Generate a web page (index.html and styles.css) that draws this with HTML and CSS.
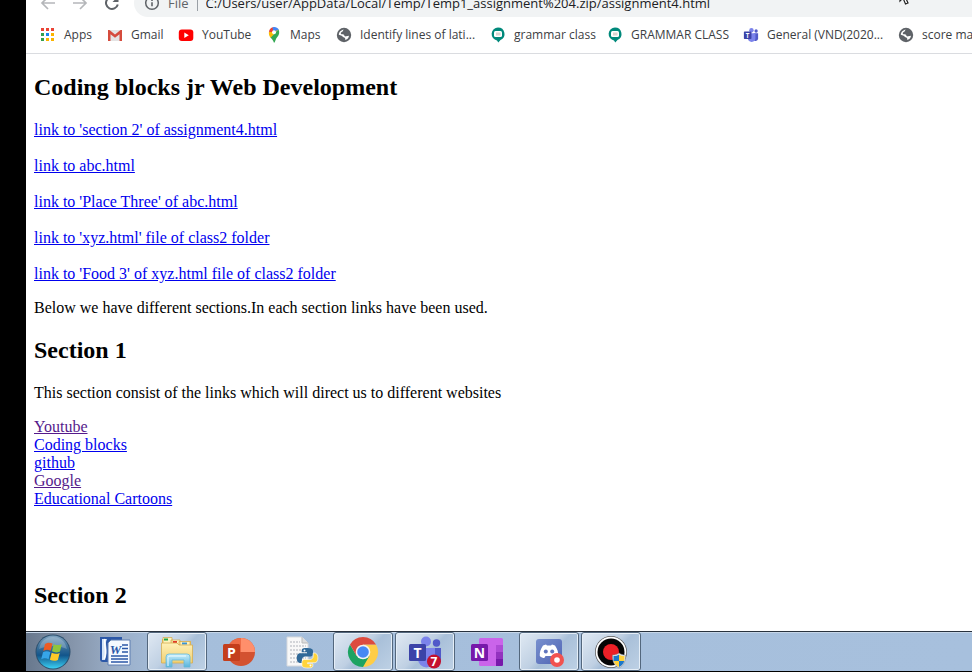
FILE: index.html
```html
<!DOCTYPE html>
<html lang="en">
<head>
<meta charset="utf-8">
<title>assignment4.html</title>
<link rel="stylesheet" href="styles.css">
</head>
<body>
<svg class="defs" aria-hidden="true">
  <defs>
    <symbol id="globe" viewBox="0 0 16 16">
      <circle cx="8" cy="8" r="7.200" fill="#5f6368"/>
      <path d="M8.200 2.800c-1.600.3-.9 1.500-2 2-.8.400-1.500.9-1.400 1.600.1.900 1.200.8 2 .9 1.200.1 1.500.6 1.500 1.300 0 .8 1 .9 1.900.7l2.800-.5c-.3 2-1.500 3.600-3.500 4.300-.6-.6.1-1.500-.6-2.100-.7-.6-2-.5-2.400-1.400-.3-.8-1.300-1.200-2.200-1.400L2.800 7.800C3 5 5.200 2.600 8.200 2.800z" fill="#fff"/>
    </symbol>
    <symbol id="meet" viewBox="0 0 16 16">
      <path d="M8 .5a6.500 6.500 0 0 1 2.500 12.500L8.300 15.600 7 13.400A6.500 6.500 0 0 1 8 .5z" fill="#00897b"/>
      <rect x="4" y="4" width="8" height="6" rx="1.500" fill="#fff"/>
      <rect x="6" y="5.500" width="4.500" height="3" fill="#d9d4cf"/>
    </symbol>
    <symbol id="teams" viewBox="0 0 36 36">
      <circle cx="19" cy="7.500" r="5" fill="#7b83eb"/>
      <circle cx="29.500" cy="9" r="3.700" fill="#5059c9"/>
      <path d="M24 14h10v12a6 6 0 0 1-10 4z" fill="#5059c9"/>
      <path d="M11 14h17v11a8.500 8.500 0 0 1-17 0z" fill="#7b83eb"/>
      <rect x="2" y="10" width="17" height="17" rx="1.500" fill="#3b43a8"/>
      <text x="10.500" y="24" class="tile-letter">T</text>
    </symbol>
    <linearGradient id="glassBlue" x1="0" y1="0" x2="0" y2="1"><stop offset="0" stop-color="#7fa3bf"/><stop offset=".45" stop-color="#2b6593"/><stop offset=".6" stop-color="#12558b"/><stop offset="1" stop-color="#3ad0f4"/></linearGradient>
    <linearGradient id="paperYellow" x1="0" y1="0" x2="0" y2="1"><stop offset="0" stop-color="#fff1b8"/><stop offset="1" stop-color="#f1cf70"/></linearGradient>
    <linearGradient id="stand" x1="0" y1="0" x2="0" y2="1"><stop offset="0" stop-color="#c6edfa"/><stop offset="1" stop-color="#59b5dc"/></linearGradient>
    <linearGradient id="discordBg" x1="0" y1="0" x2="1" y2="1"><stop offset="0" stop-color="#7890ce"/><stop offset="1" stop-color="#5064b4"/></linearGradient>
  </defs>
</svg>

<div class="screen">
  <header class="toolbar">
    <button class="nav" type="button" aria-label="Back"><svg viewBox="0 0 16 16"><path d="M15 8H2M8 2 2 8l6 6" fill="none" stroke="#b5b7ba" stroke-width="1.700"/></svg></button>
    <button class="nav" type="button" aria-label="Forward"><svg viewBox="0 0 16 16"><path d="M1 8h13M8 2l6 6-6 6" fill="none" stroke="#b5b7ba" stroke-width="1.700"/></svg></button>
    <button class="nav" type="button" aria-label="Reload"><svg viewBox="0 0 16 16"><path d="M13.800 9.500A6 6 0 1 1 12.500 4" fill="none" stroke="#5f6368" stroke-width="2"/><path d="M14.500 1v6h-6z" fill="#5f6368"/></svg></button>
    <div class="address">
      <svg class="info" viewBox="0 0 16 16"><circle cx="8" cy="8" r="6.300" fill="none" stroke="#5f6368" stroke-width="1.500"/><path d="M8 7.300v4M8 4.400v1.500" stroke="#5f6368" stroke-width="1.600"/></svg>
      <span class="scheme">File</span>
      <span class="divider"></span>
      <input class="url" type="text" aria-label="Address" value="C:/Users/user/AppData/Local/Temp/Temp1_assignment%204.zip/assignment4.html">
    </div>
    <svg class="pointer" viewBox="0 0 12 18"><path d="M1 0v13l3-3 2.500 6 2.500-1-2.500-5.500H11z" fill="#fff" stroke="#222" stroke-width="1.200"/></svg>
  </header>

  <nav class="bookmarks" aria-label="Bookmarks">
    <a href="#apps"><svg viewBox="0 0 16 16"><path d="M1 1h3v3H1zM6 1h3v3H6zM11 1h3v3h-3z" fill="#ea4335"/><path d="M1 6h3v3H1zM1 11h3v3H1z" fill="#34a04f"/><path d="M6 6h3v3H6z" fill="#1a84f0"/><path d="M11 6h3v3h-3zM6 11h3v3H6zM11 11h3v3h-3z" fill="#fbb400"/></svg><span>Apps</span></a>
    <a href="#gmail"><svg viewBox="0 0 16 16"><path d="M1 3h14v11H1z" fill="#e4e4e4"/><path d="M1 14V3h1.500L8 7.500 13.500 3H15v11h-2.500V7.200L8 10.800 3.500 7.200V14z" fill="#d54b3d"/></svg><span>Gmail</span></a>
    <a href="#yt"><svg viewBox="0 0 16 16"><rect x=".8" y="2.500" width="14.500" height="11.500" rx="3" fill="#f00"/><path d="m6.300 5.500 4.500 2.700-4.500 2.700z" fill="#fff"/></svg><span>YouTube</span></a>
    <a href="#maps"><svg viewBox="0 0 16 16"><path d="M4.300 1.800C5 1 6 .5 6.800.3L8 5 4.500 7 3 4.500c.1-1 .6-2 1.300-2.700z" fill="#ea4335"/><path d="M6.500.4c2.300-.8 5-.1 6.300 2.200L8 7z" fill="#4285f4"/><path d="m12.300 2.600-7.600 8.400C3.200 9 2.700 7.500 2.900 5L8 5z" fill="#fbbc04"/><path d="M12.600 2.600c1.300 3 .4 5.500-1.300 7.500-1.500 1.900-1.800 3.300-2.600 5.400h-.9c-.6-2-1.500-3.200-3.300-4.700z" fill="#34a853"/><circle cx="8" cy="5.300" r="2" fill="#fff"/></svg><span>Maps</span></a>
    <a href="#lat"><svg><use href="#globe"/></svg><span>Identify lines of lati...</span></a>
    <a href="#grammar"><svg><use href="#meet"/></svg><span>grammar class</span></a>
    <a href="#grammar2"><svg><use href="#meet"/></svg><span>GRAMMAR CLASS</span></a>
    <a href="#general"><svg><use href="#teams"/></svg><span>General (VND(2020...</span></a>
    <a href="#score"><svg><use href="#globe"/></svg><span>score marks</span></a>
  </nav>

  <main class="page">
    <h2>Coding blocks jr Web Development</h2>
    <div class="spaced-links">
      <a href="#section2">link to 'section 2' of assignment4.html</a>
      <a href="#abc">link to abc.html</a>
      <a href="#place3">link to 'Place Three' of abc.html</a>
      <a href="#xyz">link to 'xyz.html' file of class2 folder</a>
      <a href="#food3">link to 'Food 3' of xyz.html file of class2 folder</a>
    </div>
    <p>Below we have different sections.In each section links have been used.</p>
    <h2>Section 1</h2>
    <p>This section consist of the links which will direct us to different websites</p>
    <div class="site-links">
      <a class="seen" href="#youtube">Youtube</a>
      <a href="#cb">Coding blocks</a>
      <a href="#github">github</a>
      <a class="seen" href="#google">Google</a>
      <a href="#cartoons">Educational Cartoons</a>
    </div>
    <h2 id="section2">Section 2</h2>
  </main>

  <footer class="taskbar">
    <button type="button" class="task start" aria-label="Start">
      <svg viewBox="0 0 36 36"><circle cx="18" cy="18" r="17.500" fill="#2c506e"/><circle cx="18" cy="18" r="16.500" fill="url(#glassBlue)"/><path d="M4 15C6 6 12 3 18 3s12 3 14 12c-9-4-19-4-28 0z" fill="#fff" opacity=".22"/><path d="M10 10c3-2 5-1.500 7.500-.4l-1.800 7.200c-2.500-1.200-4.600-1.400-7.400.2z" fill="#ed5c24"/><path d="M18.700 10.200c2.600 1.200 5 1.200 8 0L25 17.500c-3 1.300-5.300 1.100-8-.2z" fill="#8fc43d"/><path d="M8 18.300c2.700-1.600 5-1.300 7.400-.1l-1.800 7c-2.600-1.300-4.700-1.500-7.400 0z" fill="#36a5e8"/><path d="M16.700 18.700c2.800 1.300 5 1.500 8 .2l-1.800 7c-3 1.400-5.300 1.100-8-.2z" fill="#fdc929"/></svg>
    </button>
    <button type="button" class="task" aria-label="Word">
      <svg viewBox="0 0 36 36"><path d="M3 3h22v25H6Q3 28 3 25z" fill="#2b57a7"/><path d="M5 5h5C7 10 12 15 8 26H5z" fill="#d5e5f8"/><path d="M8 5c-2 6 3 12-1 20" fill="none" stroke="#fff" stroke-width="1.500"/><path d="M14 6h19v25H11V9z" fill="#f5f9ff" stroke="#5f7fb2"/><text x="18.500" y="20" class="word-letter">W</text><path d="M25 11h6M25 14.500h6M25 18h6M14 22h17M14 25h17M14 28h17" stroke="#2b57a7" stroke-width="1.500"/></svg>
    </button>
    <button type="button" class="task open" aria-label="File Explorer">
      <svg viewBox="0 0 36 36"><path d="M3 5h10l1.500 2H32v17H3z" fill="#e6bc58"/><path d="M4 3.500h9v6H4zM12 6h9v5h-9zM20 7.500h11v5H20z" fill="#fff3bd" stroke="#d3a84b" stroke-width=".7"/><path d="M5 4.500h4v2H5z" fill="#21a545"/><path d="M14 7h4v2h-4z" fill="#e33928"/><path d="M23 8.500h5v2h-5z" fill="#3993d6"/><path d="M2.500 9H18l2 2h13.500v18h-31z" fill="url(#paperYellow)" stroke="#d5ad50" stroke-width=".8"/><path d="M7 33V23q0-3 3-3h18q3 0 3 3v10h-6v-7H13v7z" fill="url(#stand)" stroke="#65b9d9" stroke-width=".8"/><path d="M9 32V23.500q0-1.500 2-1.500h16" stroke="#effcff" fill="none"/></svg>
    </button>
    <button type="button" class="task" aria-label="PowerPoint">
      <svg viewBox="0 0 36 36"><circle cx="20" cy="18" r="14" fill="#d35230"/><path d="M20 4v14H6A14 14 0 0 1 20 4z" fill="#ed6c47"/><path d="M20 4a14 14 0 0 1 14 14H20z" fill="#ff8f6b"/><rect x="2" y="10" width="17" height="17" rx="1.500" fill="#c43e1c"/><text x="10.500" y="24" class="tile-letter">P</text></svg>
    </button>
    <button type="button" class="task" aria-label="Python">
      <svg viewBox="0 0 36 36"><path d="M4 3h15l6 6v23H4z" fill="#f8f8f8" stroke="#d6d9dc"/><path d="M19 3v6h6" fill="#ddd" stroke="#bbb"/><path d="M7 8h10M7 12h16M7 16h16M7 20h16M7 24h16M7 28h16" stroke="#c6c9ce" stroke-width="1.500" stroke-dasharray="2 1"/><path d="M23.500 14c-5 0-4.800 1-4.800 4.300H24v1h-7.300c-4 0-4 9.700.2 9.700h2v-3.200c0-2 1.500-3.300 3.300-3.300h5.300c1.600 0 2.500-1.200 2.500-2.700V17c0-2.200-2.500-3-6.500-3z" fill="#306998"/><path d="M25 34c5 0 4.900-1 4.900-4.300h-5.300v-1h7.300c4 0 4-9.700-.2-9.700h-1.500v3.200c0 2-1.500 3.300-3.300 3.300h-5.300c-1.600 0-2.700 1.200-2.700 2.700V31c0 2.200 2 3 6.100 3z" fill="#ffd43b" stroke="#fff" stroke-width=".6"/><circle cx="21.500" cy="16.500" r="1" fill="#fff"/><circle cx="27.500" cy="31.500" r="1" fill="#fff"/></svg>
    </button>
    <button type="button" class="task open" aria-label="Chrome">
      <svg viewBox="0 0 36 36"><path d="M18 18V10.500h13A15 15 0 0 1 18 33z" fill="#ffcd46"/><path d="m18 18 6.500 3.700L18 33A15 15 0 0 1 5 10.500l6.500 11.200z" fill="#1da362"/><path d="m5 10.500 6.500 11.200L18 18v-7.500h13A15 15 0 0 0 5 10.500z" fill="#dd4b3e"/><circle cx="18" cy="18" r="7.300" fill="#f3f3f3"/><circle cx="18" cy="18" r="5.800" fill="#4688f4"/></svg>
    </button>
    <button type="button" class="task open" aria-label="Teams">
      <svg viewBox="0 0 36 36"><use href="#teams"/><circle cx="27" cy="27.500" r="7" fill="#c4112d"/><text x="27" y="32" class="count">7</text></svg>
    </button>
    <button type="button" class="task" aria-label="OneNote">
      <svg viewBox="0 0 36 36"><rect x="10" y="4" width="24" height="28" rx="1.500" fill="#ca64ea"/><path d="M27 11h7v7h-7z" fill="#ae4bd5"/><path d="M27 18h7v7h-7z" fill="#9332bf"/><path d="M27 25h7v5.500q0 1.500-1.500 1.500H27z" fill="#7719aa"/><rect x="2" y="10" width="17" height="17" rx="1.500" fill="#7719aa"/><text x="10.500" y="24" class="tile-letter">N</text></svg>
    </button>
    <button type="button" class="task open" aria-label="Discord">
      <svg viewBox="0 0 36 36"><rect x="5" y="5" width="26" height="25" rx="3" fill="url(#discordBg)"/><path d="M12 11.500l3-1 1 1h4l1-1 3 1c2.500 3.500 3.500 7 3.200 10.500-1.500 1.500-3 2-4.500 2l-1.200-2h-7l-1.200 2c-1.500 0-3-.5-4.500-2-.3-3.500.7-7 3.200-10.500z" fill="#fff"/><circle cx="14.800" cy="17.500" r="2" fill="#6075be"/><circle cx="21.200" cy="17.500" r="2" fill="#6075be"/><circle cx="26" cy="26" r="7" fill="#f1524f"/><circle cx="26" cy="26" r="2.800" fill="#fff"/></svg>
    </button>
    <button type="button" class="task open" aria-label="Screen recorder">
      <svg viewBox="0 0 36 36"><circle cx="18" cy="18" r="16" fill="#555"/><circle cx="18" cy="18" r="15.300" fill="#fff"/><circle cx="18" cy="18" r="13.500" fill="#050505"/><circle cx="18" cy="18" r="8" fill="#ed2027"/><path d="M26 19c2 1.500 4 2 6.500 2 .3 6-1.500 10-6.500 13-5-3-6.800-7-6.500-13 2.500 0 4.500-.5 6.500-2z" fill="#e8eef2" stroke="#888" stroke-width=".6"/><path d="M26 20.500V27h-5.500v-5c2 0 4-.5 5.500-1.500zM26 27h5.200c-.5 2.500-2 4.300-5.200 6z" fill="#1c78c9"/><path d="M26 20.500V27h5.200l.3-5c-2 0-4-.5-5.500-1.500zM26 27h-5.200c.5 2.500 2 4.300 5.200 6z" fill="#ffd23c"/></svg>
    </button>
  </footer>
</div>
</body>
</html>
```
FILE: styles.css
```css
* {
  box-sizing: border-box;
}

body {
  margin: 0;
  background: #000;
  font-family: "Liberation Serif", "Times New Roman", serif;
  font-size: 16px;
  line-height: 18px;
  color: #000;
}

button {
  border: 0;
  padding: 0;
  background: none;
}

.defs {
  position: absolute;
  width: 0;
  height: 0;
}

.screen {
  display: flex;
  flex-direction: column;
  height: 100vh;
  padding: 0 0 1px 26px;
  overflow: hidden;
}

/* Browser toolbar, partly scrolled off the top of the screen */
.toolbar {
  position: relative;
  flex: none;
  display: flex;
  align-items: flex-end;
  height: 17px;
  padding-left: 6px;
  overflow: hidden;
  background: #fff;
  font-family: "Open Sans", "Segoe UI", sans-serif;
}

.nav {
  flex: none;
  display: flex;
  align-items: center;
  justify-content: center;
  width: 32px;
  height: 28px;
}

.nav svg,
.info {
  flex: none;
  width: 16px;
  height: 16px;
}

.address {
  flex: 1;
  display: flex;
  align-items: center;
  height: 28px;
  margin-left: 6px;
  padding-left: 10px;
  border-radius: 14px 0 0 14px;
  background: #f1f3f4;
  font-size: 13px;
  color: #5f6368;
}

.scheme {
  margin-left: 8px;
}

.divider {
  width: 1px;
  height: 16px;
  margin: 0 8px;
  background: #9aa0a6;
}

.url {
  flex: 1;
  min-width: 0;
  border: 0;
  padding: 0;
  background: none;
  font: inherit;
  color: #202124;
}

.pointer {
  position: absolute;
  right: 61px;
  bottom: 11px;
  width: 12px;
  height: 18px;
}

.bookmarks {
  flex: none;
  display: grid;
  grid-template-columns: 67px 71px 88px 70px 154px 117px 136px 155px 1fr;
  align-items: center;
  height: 37px;
  padding-left: 14px;
  overflow: hidden;
  border-bottom: 1px solid #dadce0;
  background: #fff;
  font-family: "Open Sans", "Segoe UI", sans-serif;
  font-size: 12px;
}

.bookmarks a {
  display: flex;
  align-items: center;
  gap: 8px;
  color: #3c4043;
  text-decoration: none;
  white-space: nowrap;
}

.bookmarks svg {
  flex: none;
  width: 16px;
  height: 16px;
}

.page {
  flex: 1;
  min-height: 0;
  padding: 0 8px;
  overflow: hidden;
  background: #fff;
}

h2 {
  margin: 20px 0;
  font-size: 24px;
  line-height: 27px;
}

p {
  margin: 16px 0;
}

.page a {
  color: #00e;
}

.page a.seen {
  color: #551a8b;
}

.spaced-links,
.site-links {
  display: flex;
  flex-direction: column;
  align-items: flex-start;
}

.spaced-links {
  gap: 18px;
}

.site-links {
  margin-bottom: 74px;
}

/* Desktop taskbar */
.taskbar {
  flex: none;
  display: flex;
  gap: 2px;
  height: 40px;
  border-top: 1px solid #28323e;
  background: linear-gradient(90deg, #68788d 0, #8797ad 50px, #9aaec8 90px, #a5bedb 140px, #a7c0dd 100%);
  box-shadow: inset 0 1px #c6d6e8;
}

.task {
  flex: none;
  display: flex;
  align-items: center;
  justify-content: center;
  width: 60px;
}

.task.start {
  width: 57px;
  padding-right: 3px;
}

.task svg {
  width: 36px;
  height: 36px;
}

.task.open {
  border: 1px solid #53677d;
  border-radius: 3px;
  background: linear-gradient(135deg, #e0e9f3, #bfd0e3 45%, #a9c0d9 55%, #bed1e5);
  box-shadow: inset 0 0 0 1px #e5eef7;
}

.tile-letter,
.count,
.word-letter {
  font-family: "Open Sans", "Segoe UI", sans-serif;
  font-weight: 700;
  text-anchor: middle;
  fill: #fff;
}

.tile-letter {
  font-size: 14px;
}

.count {
  font-size: 12px;
}

.word-letter {
  font-family: "Liberation Serif", serif;
  font-size: 13px;
  font-style: italic;
  fill: #2b57a7;
}
```
